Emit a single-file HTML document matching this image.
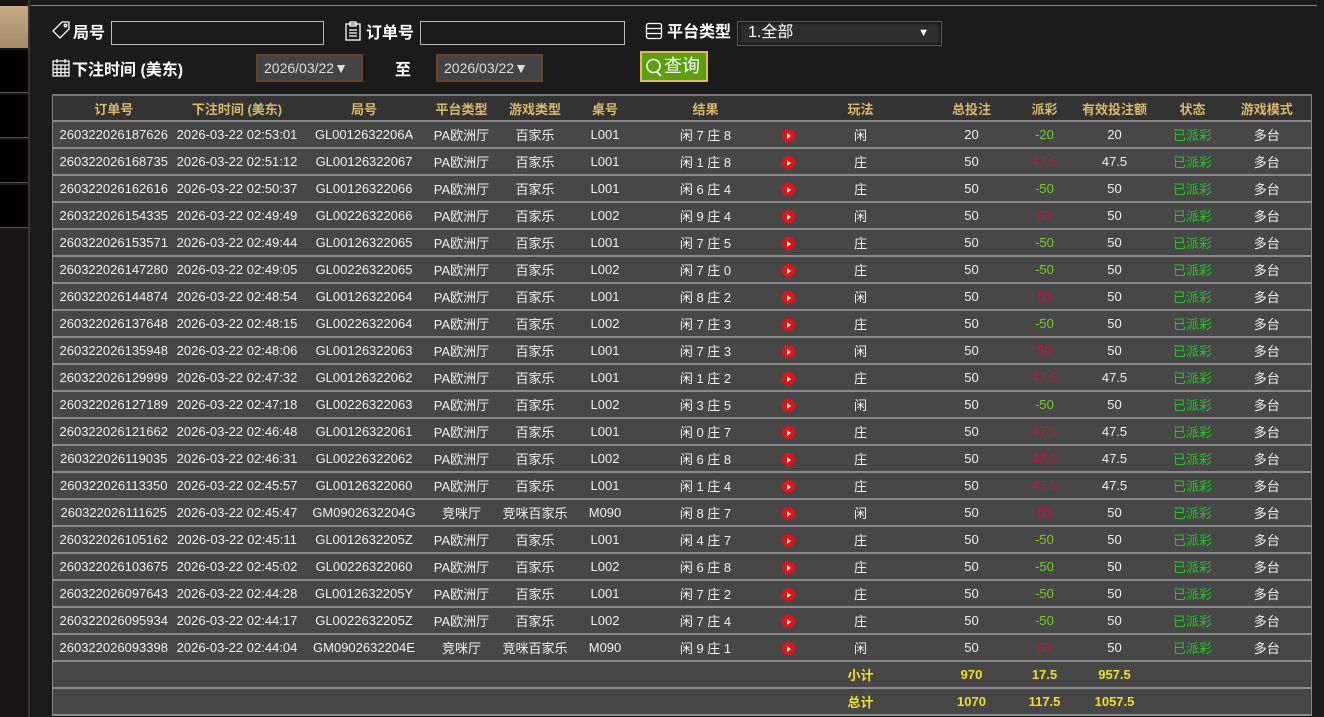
<!DOCTYPE html>
<html><head><meta charset="utf-8">
<style>
*{margin:0;padding:0;box-sizing:border-box}
body{width:1324px;height:717px;overflow:hidden;background:#1b1b1b;font-family:"Liberation Sans","Noto Sans CJK SC",sans-serif;color:#eee;position:relative}
.side{position:absolute;left:0;top:0;width:30px;height:717px;background:#181716;border-right:2px solid #3a332b}
.side .tan{position:absolute;top:6px;left:0;width:28px;height:42px;background:linear-gradient(#c9aa86,#a88a66)}
.side .b{position:absolute;left:0;width:28px;height:43px;background:#000;border-bottom:1px solid #555}
.topline{position:absolute;left:31px;top:5px;width:1286px;height:1px;background:#8a8a8a}
.lbl{position:absolute;font-size:16px;font-weight:bold;color:#fff;white-space:nowrap}
.inp{position:absolute;height:24px;border:1px solid #bbb;background:transparent}
.date{position:absolute;height:28px;width:107px;background:#444;border:2px solid #6a4420;color:#ddd;font-size:14px;line-height:24px;padding-left:6px}
.sel{position:absolute;left:737px;top:21px;width:205px;height:25px;background:#2e2e2e;border:1px solid #7a5530;color:#fff;font-size:16px;line-height:22px;padding-left:10px;box-shadow:inset 0 0 4px #000}
.btn{position:absolute;left:640px;top:51px;width:68px;height:31px;background:#5aa10e;border:2px solid #e6b85a;color:#fff;font-size:18px;line-height:26px;padding-left:22px}
table{position:absolute;left:52px;top:94px;border-collapse:collapse;table-layout:fixed;width:1259px;font-size:13px;border-left:1px solid #888;border-right:1px solid #888}
th{background:#333;color:#d9b96a;height:26px;font-weight:bold;border-top:2px solid #777;border-bottom:2px solid #888}
td{background:#474747;height:27px;text-align:center;border-bottom:2px solid #8a8a8a;color:#f0f0f0;white-space:nowrap}
.r{color:#d0103a}.g{color:#6ed31a}.s{color:#1ecb1e}
.y td{color:#f0e020;font-weight:bold}
.ic{display:inline-block;width:13px;height:13px;border-radius:50%;background:#e81010;position:relative;vertical-align:middle}
.ic:after{content:"";position:absolute;left:5px;top:3.5px;border-left:4px solid #fff;border-top:3px solid transparent;border-bottom:3px solid transparent}
</style></head><body>
<div class="side"><div class="tan"></div><div class="b" style="top:50px"></div><div class="b" style="top:95px"></div><div class="b" style="top:140px"></div><div class="b" style="top:185px"></div></div>
<div class="topline"></div>
<svg style="position:absolute;left:52px;top:20px" width="20" height="20" viewBox="0 0 20 20" fill="none" stroke="#fff" stroke-width="1.3"><path d="M10 2h7v7l-9 9-7-7z"/><circle cx="13.5" cy="5.5" r="1.3"/></svg>
<div class="lbl" style="left:73px;top:19px">局号</div>
<div class="inp" style="left:111px;top:21px;width:213px"></div>
<svg style="position:absolute;left:344px;top:21px" width="18" height="20" viewBox="0 0 18 20" fill="none" stroke="#fff" stroke-width="1.3"><rect x="2" y="3" width="14" height="16"/><rect x="6" y="1" width="6" height="4"/><path d="M5 9h8M5 12h8M5 15h8"/></svg>
<div class="lbl" style="left:366px;top:19px">订单号</div>
<div class="inp" style="left:420px;top:21px;width:205px"></div>
<svg style="position:absolute;left:645px;top:22px" width="18" height="18" viewBox="0 0 18 18" fill="none" stroke="#fff" stroke-width="1.3"><rect x="1.5" y="1.5" width="15" height="15" rx="2"/><path d="M1.5 6.5h15M1.5 11.5h15"/></svg>
<div class="lbl" style="left:667px;top:18px">平台类型</div>
<div class="sel">1.全部<span style="position:absolute;right:12px;top:0;font-size:11px">▼</span></div>
<svg style="position:absolute;left:52px;top:58px" width="18" height="19" viewBox="0 0 18 19" fill="none" stroke="#fff" stroke-width="1.2"><rect x="1" y="3" width="16" height="15"/><path d="M1 7h16M5 1v4M13 1v4M1 11h16M1 14.5h16M5 7v11M9 7v11M13 7v11"/></svg>
<div class="lbl" style="left:72px;top:56px">下注时间 (美东)</div>
<div class="date" style="left:256px;top:54px">2026/03/22▼</div>
<div class="lbl" style="left:395px;top:56px">至</div>
<div class="date" style="left:436px;top:54px">2026/03/22▼</div>
<div class="btn"><svg style="position:absolute;left:3px;top:4px" width="18" height="20" viewBox="0 0 18 20" fill="none" stroke="#fff" stroke-width="1.6"><circle cx="8.5" cy="9" r="6.5"/><path d="M12 15l4 4"/></svg>查询</div>
<table>
<colgroup><col style="width:122px"><col style="width:125px"><col style="width:129px"><col style="width:66px"><col style="width:81px"><col style="width:59px"><col style="width:142px"><col style="width:24px"><col style="width:120px"><col style="width:102px"><col style="width:44px"><col style="width:96px"><col style="width:60px"><col style="width:89px"></colgroup>
<tr><th>订单号</th><th>下注时间 (美东)</th><th>局号</th><th>平台类型</th><th>游戏类型</th><th>桌号</th><th>结果</th><th></th><th>玩法</th><th>总投注</th><th>派彩</th><th>有效投注额</th><th>状态</th><th>游戏模式</th></tr>
<tr><td>260322026187626</td><td>2026-03-22 02:53:01</td><td>GL0012632206A</td><td>PA欧洲厅</td><td>百家乐</td><td>L001</td><td>闲 7 庄 8</td><td><i class="ic"></i></td><td>闲</td><td>20</td><td class="g">-20</td><td>20</td><td class="s">已派彩</td><td>多台</td></tr>
<tr><td>260322026168735</td><td>2026-03-22 02:51:12</td><td>GL00126322067</td><td>PA欧洲厅</td><td>百家乐</td><td>L001</td><td>闲 1 庄 8</td><td><i class="ic"></i></td><td>庄</td><td>50</td><td class="r">47.5</td><td>47.5</td><td class="s">已派彩</td><td>多台</td></tr>
<tr><td>260322026162616</td><td>2026-03-22 02:50:37</td><td>GL00126322066</td><td>PA欧洲厅</td><td>百家乐</td><td>L001</td><td>闲 6 庄 4</td><td><i class="ic"></i></td><td>庄</td><td>50</td><td class="g">-50</td><td>50</td><td class="s">已派彩</td><td>多台</td></tr>
<tr><td>260322026154335</td><td>2026-03-22 02:49:49</td><td>GL00226322066</td><td>PA欧洲厅</td><td>百家乐</td><td>L002</td><td>闲 9 庄 4</td><td><i class="ic"></i></td><td>闲</td><td>50</td><td class="r">50</td><td>50</td><td class="s">已派彩</td><td>多台</td></tr>
<tr><td>260322026153571</td><td>2026-03-22 02:49:44</td><td>GL00126322065</td><td>PA欧洲厅</td><td>百家乐</td><td>L001</td><td>闲 7 庄 5</td><td><i class="ic"></i></td><td>庄</td><td>50</td><td class="g">-50</td><td>50</td><td class="s">已派彩</td><td>多台</td></tr>
<tr><td>260322026147280</td><td>2026-03-22 02:49:05</td><td>GL00226322065</td><td>PA欧洲厅</td><td>百家乐</td><td>L002</td><td>闲 7 庄 0</td><td><i class="ic"></i></td><td>庄</td><td>50</td><td class="g">-50</td><td>50</td><td class="s">已派彩</td><td>多台</td></tr>
<tr><td>260322026144874</td><td>2026-03-22 02:48:54</td><td>GL00126322064</td><td>PA欧洲厅</td><td>百家乐</td><td>L001</td><td>闲 8 庄 2</td><td><i class="ic"></i></td><td>闲</td><td>50</td><td class="r">50</td><td>50</td><td class="s">已派彩</td><td>多台</td></tr>
<tr><td>260322026137648</td><td>2026-03-22 02:48:15</td><td>GL00226322064</td><td>PA欧洲厅</td><td>百家乐</td><td>L002</td><td>闲 7 庄 3</td><td><i class="ic"></i></td><td>庄</td><td>50</td><td class="g">-50</td><td>50</td><td class="s">已派彩</td><td>多台</td></tr>
<tr><td>260322026135948</td><td>2026-03-22 02:48:06</td><td>GL00126322063</td><td>PA欧洲厅</td><td>百家乐</td><td>L001</td><td>闲 7 庄 3</td><td><i class="ic"></i></td><td>闲</td><td>50</td><td class="r">50</td><td>50</td><td class="s">已派彩</td><td>多台</td></tr>
<tr><td>260322026129999</td><td>2026-03-22 02:47:32</td><td>GL00126322062</td><td>PA欧洲厅</td><td>百家乐</td><td>L001</td><td>闲 1 庄 2</td><td><i class="ic"></i></td><td>庄</td><td>50</td><td class="r">47.5</td><td>47.5</td><td class="s">已派彩</td><td>多台</td></tr>
<tr><td>260322026127189</td><td>2026-03-22 02:47:18</td><td>GL00226322063</td><td>PA欧洲厅</td><td>百家乐</td><td>L002</td><td>闲 3 庄 5</td><td><i class="ic"></i></td><td>闲</td><td>50</td><td class="g">-50</td><td>50</td><td class="s">已派彩</td><td>多台</td></tr>
<tr><td>260322026121662</td><td>2026-03-22 02:46:48</td><td>GL00126322061</td><td>PA欧洲厅</td><td>百家乐</td><td>L001</td><td>闲 0 庄 7</td><td><i class="ic"></i></td><td>庄</td><td>50</td><td class="r">47.5</td><td>47.5</td><td class="s">已派彩</td><td>多台</td></tr>
<tr><td>260322026119035</td><td>2026-03-22 02:46:31</td><td>GL00226322062</td><td>PA欧洲厅</td><td>百家乐</td><td>L002</td><td>闲 6 庄 8</td><td><i class="ic"></i></td><td>庄</td><td>50</td><td class="r">47.5</td><td>47.5</td><td class="s">已派彩</td><td>多台</td></tr>
<tr><td>260322026113350</td><td>2026-03-22 02:45:57</td><td>GL00126322060</td><td>PA欧洲厅</td><td>百家乐</td><td>L001</td><td>闲 1 庄 4</td><td><i class="ic"></i></td><td>庄</td><td>50</td><td class="r">47.5</td><td>47.5</td><td class="s">已派彩</td><td>多台</td></tr>
<tr><td>260322026111625</td><td>2026-03-22 02:45:47</td><td>GM0902632204G</td><td>竞咪厅</td><td>竞咪百家乐</td><td>M090</td><td>闲 8 庄 7</td><td><i class="ic"></i></td><td>闲</td><td>50</td><td class="r">50</td><td>50</td><td class="s">已派彩</td><td>多台</td></tr>
<tr><td>260322026105162</td><td>2026-03-22 02:45:11</td><td>GL0012632205Z</td><td>PA欧洲厅</td><td>百家乐</td><td>L001</td><td>闲 4 庄 7</td><td><i class="ic"></i></td><td>庄</td><td>50</td><td class="g">-50</td><td>50</td><td class="s">已派彩</td><td>多台</td></tr>
<tr><td>260322026103675</td><td>2026-03-22 02:45:02</td><td>GL00226322060</td><td>PA欧洲厅</td><td>百家乐</td><td>L002</td><td>闲 6 庄 8</td><td><i class="ic"></i></td><td>庄</td><td>50</td><td class="g">-50</td><td>50</td><td class="s">已派彩</td><td>多台</td></tr>
<tr><td>260322026097643</td><td>2026-03-22 02:44:28</td><td>GL0012632205Y</td><td>PA欧洲厅</td><td>百家乐</td><td>L001</td><td>闲 7 庄 2</td><td><i class="ic"></i></td><td>庄</td><td>50</td><td class="g">-50</td><td>50</td><td class="s">已派彩</td><td>多台</td></tr>
<tr><td>260322026095934</td><td>2026-03-22 02:44:17</td><td>GL0022632205Z</td><td>PA欧洲厅</td><td>百家乐</td><td>L002</td><td>闲 7 庄 4</td><td><i class="ic"></i></td><td>庄</td><td>50</td><td class="g">-50</td><td>50</td><td class="s">已派彩</td><td>多台</td></tr>
<tr><td>260322026093398</td><td>2026-03-22 02:44:04</td><td>GM0902632204E</td><td>竞咪厅</td><td>竞咪百家乐</td><td>M090</td><td>闲 9 庄 1</td><td><i class="ic"></i></td><td>闲</td><td>50</td><td class="r">50</td><td>50</td><td class="s">已派彩</td><td>多台</td></tr>
<tr class="y"><td></td><td></td><td></td><td></td><td></td><td></td><td></td><td></td><td>小计</td><td>970</td><td>17.5</td><td>957.5</td><td></td><td></td></tr>
<tr class="y"><td></td><td></td><td></td><td></td><td></td><td></td><td></td><td></td><td>总计</td><td>1070</td><td>117.5</td><td>1057.5</td><td></td><td></td></tr>
</table>
</body></html>
